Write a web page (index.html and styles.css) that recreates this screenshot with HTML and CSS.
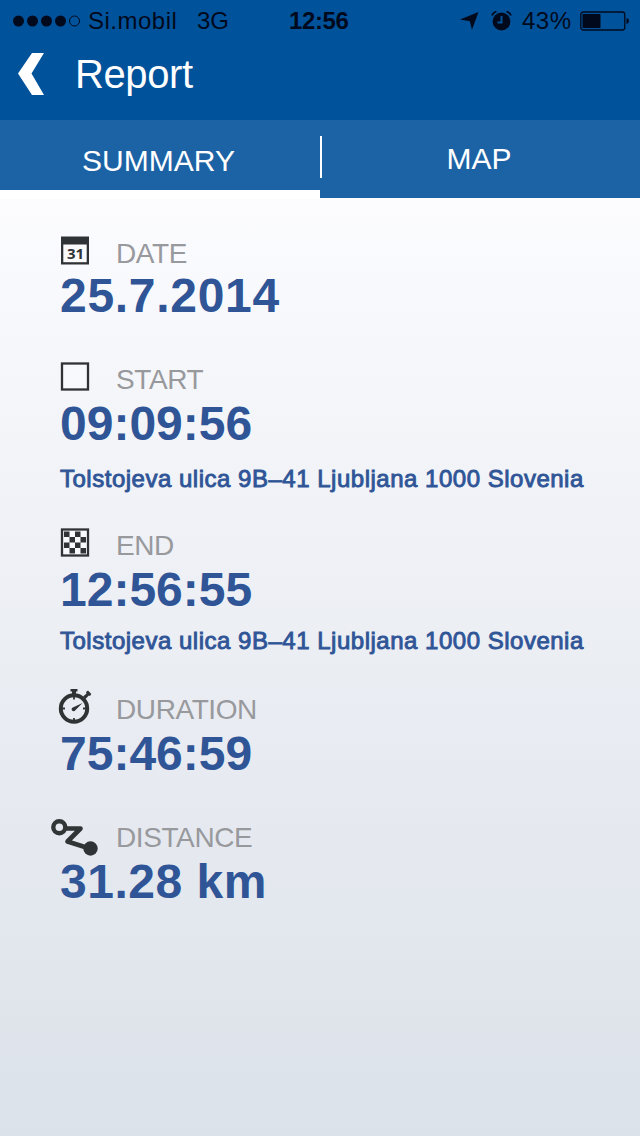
FILE: index.html
```html
<!DOCTYPE html>
<html lang="en">
<head>
    <meta charset="UTF-8">
    <meta name="viewport" content="width=device-width, initial-scale=1.0">
    <title>Report</title>
    <link rel="stylesheet" href="styles.css">
</head>
<body>
    <header class="header">
        <div class="status-bar">
            <svg class="signal" width="70" height="14" viewBox="0 0 70 14">
                <circle cx="6.5" cy="7" r="5.5"/>
                <circle cx="20.5" cy="7" r="5.5"/>
                <circle cx="34.5" cy="7" r="5.5"/>
                <circle cx="48.5" cy="7" r="5.5"/>
                <circle cx="62.5" cy="7" r="5" fill="none" stroke="#000a1c" stroke-width="1"/>
            </svg>
            <span class="carrier">Si.mobil</span>
            <span class="network">3G</span>
            <span class="clock">12:56</span>
            <svg class="location" width="20" height="20" viewBox="0 0 20 20">
                <path d="M18.500 1L0 8.500L9.800 10.200L12 18.800z"/>
            </svg>
            <svg class="alarm" width="22" height="22" viewBox="0 0 22 22">
                <circle cx="10.5" cy="11.5" r="8.9"/>
                <path d="M1 5.500Q2 2.500 5.500 1.500M20 5.500Q19 2.500 15.500 1.500" fill="none" stroke="#000a1c" stroke-width="1.8"/>
                <path d="M10.500 6V12.500H6.500" fill="none" stroke="#00529b" stroke-width="2"/>
            </svg>
            <span class="percent">43%</span>
            <svg class="battery" width="50" height="20" viewBox="0 0 50 20">
                <rect x="0.8" y="1" width="44" height="18" rx="2.5" fill="none" stroke="#000a1c" stroke-width="1.3"/>
                <rect x="2.5" y="3" width="18" height="14"/>
                <path d="M46.500 7Q49 7.300 49 10T46.500 13z"/>
            </svg>
        </div>
        <div class="title-bar">
            <svg class="back" width="28" height="42" viewBox="0 0 28 42">
                <path d="M15 0H27L14.500 20.500 27 42H15L1 20.500z"/>
            </svg>
            <h1 class="title">Report</h1>
        </div>
    </header>

    <nav class="tabs">
        <div class="tab tab-active">SUMMARY</div>
        <div class="divider"></div>
        <div class="tab tab-map">MAP</div>
    </nav>

    <main class="report">
        <section class="entry entry-date">
            <div class="entry-head">
                <svg class="icon" width="56" height="40" viewBox="0 0 56 40">
                    <path class="dark" d="M11 4.500H39V32.500H11z"/>
                    <path fill="#fafafd" d="M13.300 12.500H36.700V30.200H13.300z"/>
                    <text class="day" x="17" y="26.700" textLength="17">31</text>
                </svg>
                <span class="label">DATE</span>
            </div>
            <p class="value">25.7.2014</p>
        </section>

        <section class="entry entry-start">
            <div class="entry-head">
                <svg class="icon" width="56" height="40" viewBox="0 0 56 40">
                    <rect class="outline" x="12" y="5.5" width="26" height="26"/>
                </svg>
                <span class="label">START</span>
            </div>
            <p class="value">09:09:56</p>
            <p class="address">Tolstojeva ulica 9B–41 Ljubljana 1000 Slovenia</p>
        </section>

        <section class="entry entry-end">
            <div class="entry-head">
                <svg class="icon" width="56" height="40" viewBox="0 0 56 40">
                    <rect class="outline" x="12" y="5.5" width="26" height="26"/>
                    <path class="dark" d="M14 7.500h5.500v5.500h-5.500zM25 7.500h5.500v5.500h-5.500zM19.500 13h5.500v5.500h-5.500zM30.500 13h5.500v5.500h-5.500zM14 18.500h5.500v5.500h-5.500zM25 18.500h5.500v5.500h-5.500zM19.500 24h5.500v5.500h-5.500zM30.500 24h5.500v5.500h-5.500z"/>
                </svg>
                <span class="label">END</span>
            </div>
            <p class="value">12:56:55</p>
            <p class="address">Tolstojeva ulica 9B–41 Ljubljana 1000 Slovenia</p>
        </section>

        <section class="entry entry-duration">
            <div class="entry-head">
                <svg class="icon" width="56" height="40" viewBox="0 0 56 40">
                    <circle cx="24" cy="20.5" r="13.2" fill="none" stroke="#303333" stroke-width="4"/>
                    <path class="dark" d="M20.500 1H27.500V3.500H26V6.500H22V3.500H20.500zM33 8.500L36.500 5.500 36 4 38 2.500 41.300 6 40 8 38.800 7.500 35.500 11z"/>
                    <path d="M24 8V11.500M24 30V33.500M11.500 20.500H15M33 20.500H36.500" fill="none" stroke="#303333" stroke-width="1.8"/>
                    <path class="dark" d="M32.500 15L25.300 22.300A2 2 0 1 1 22.800 19.400z"/>
                </svg>
                <span class="label">DURATION</span>
            </div>
            <p class="value">75:46:59</p>
        </section>

        <section class="entry entry-distance">
            <div class="entry-head">
                <svg class="icon" width="56" height="40" viewBox="0 0 56 40">
                    <circle cx="9.3" cy="11.3" r="6" fill="none" stroke="#303535" stroke-width="4.4"/>
                    <path d="M15 12.500H30.500L17.500 25.500 38 32" fill="none" stroke="#303535" stroke-width="4.6" stroke-linejoin="round"/>
                    <circle class="dark" cx="40.5" cy="32.5" r="7.2"/>
                </svg>
                <span class="label">DISTANCE</span>
            </div>
            <p class="value value-distance">31.28 km</p>
        </section>
    </main>
</body>
</html>
```

FILE: styles.css
```css
* {
    margin: 0;
    padding: 0;
    box-sizing: border-box;
}

body {
    width: 640px;
    height: 1136px;
    overflow: hidden;
    font-family: "Liberation Sans", Arial, sans-serif;
    background: linear-gradient(#fcfcff 198px, #f3f5f9 420px, #e8ebf1 750px, #dce2ea 1136px);
}

svg {
    display: block;
    flex: none;
    overflow: visible;
}

/* Header */
.header {
    height: 120px;
    background: #00529b;
}

.status-bar {
    display: flex;
    align-items: center;
    height: 41px;
    padding-left: 12px;
    font-size: 24px;
    line-height: 40px;
    white-space: nowrap;
    color: #000a1c;
    fill: #000a1c;
}

.carrier {
    width: 109px;
    padding-left: 6px;
    letter-spacing: 0.5px;
}

.network {
    width: 98px;
    padding-left: 6px;
}

.clock {
    width: 171px;
    font-weight: bold;
    letter-spacing: -0.4px;
}

.alarm {
    margin-left: 11px;
}

.percent {
    width: 58px;
    margin-left: 9px;
    letter-spacing: 0.5px;
}

.title-bar {
    display: flex;
    align-items: center;
    height: 66px;
    padding-left: 17px;
}

.back {
    fill: #fff;
}

.title {
    padding-left: 30px;
    font-size: 40px;
    font-weight: normal;
    line-height: 66px;
    letter-spacing: -0.4px;
    color: #fff;
}

/* Tabs */
.tabs {
    display: flex;
    height: 78px;
    background: #1c63a6;
    color: #fff;
    font-size: 30px;
    line-height: 81px;
    text-align: center;
}

.tab {
    width: 320px;
    padding-right: 3px;
}

.tab-active {
    height: 79px;
    border-bottom: 9px solid #fff;
}

.tab-map {
    width: 318px;
    padding-right: 4px;
    line-height: 77px;
}

.divider {
    width: 2px;
    height: 42px;
    margin-top: 16px;
    background: #fff;
}

/* Report */
.report {
    padding: 34px 0 0 50px;
}

.entry-head {
    display: flex;
    height: 42px;
}

.entry-date .entry-head {
    height: 40px;
}

.icon {
    margin-right: 10px;
}

.label {
    padding-top: 6px;
    font-size: 28px;
    line-height: 32px;
    letter-spacing: -0.4px;
    color: #98999d;
}

.value {
    padding-left: 10px;
    font-size: 48px;
    font-weight: bold;
    line-height: 48px;
    color: #2f5597;
}

.entry-date .value {
    letter-spacing: 0.7px;
}

.value-distance {
    letter-spacing: 0.5px;
}

/* Regular face thickened to a medium weight */
.address {
    padding: 17px 0 0 10px;
    font-size: 24px;
    line-height: 28px;
    letter-spacing: 0.51px;
    white-space: nowrap;
    color: #2f5597;
    -webkit-text-stroke: 0.9px #2f5597;
}

.entry-date,
.entry-duration {
    margin-bottom: 38px;
}

.entry-start {
    margin-bottom: 31px;
}

.entry-end {
    margin-bottom: 33px;
}

.entry-end .address {
    padding-top: 13px;
}

/* Icons */
.dark {
    fill: #303335;
}

.outline {
    fill: #f8f9fc;
    stroke: #303335;
    stroke-width: 2.3;
}

.day {
    font-family: "Open Sans", sans-serif;
    font-size: 15px;
    font-weight: bold;
    fill: #303335;
}
```
